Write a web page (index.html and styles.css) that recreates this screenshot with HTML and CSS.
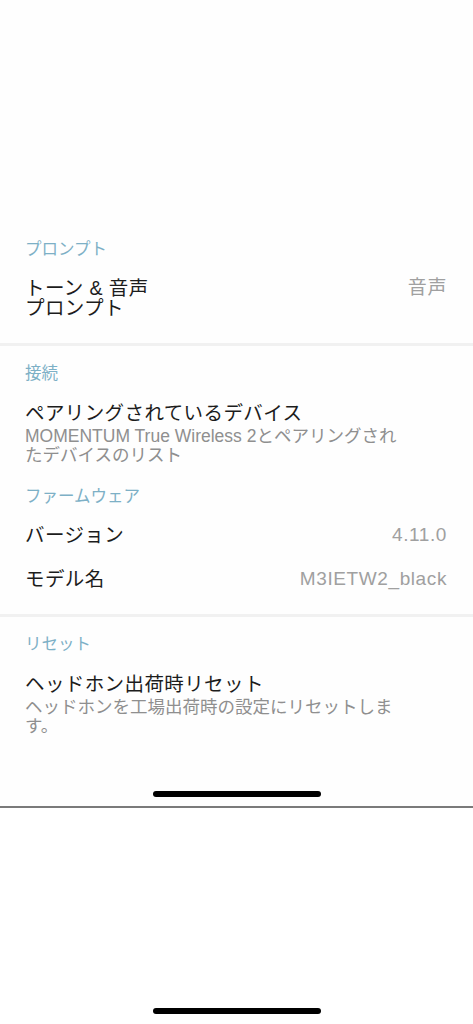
FILE: index.html
```html
<!DOCTYPE html>
<html lang="ja">
  <head>
    <meta charset="UTF-8" />
    <meta name="viewport" content="width=device-width, initial-scale=1.0" />
    <title>設定</title>
    <link rel="stylesheet" href="styles.css">
  </head>
  <body>
    <div class="screen">
      <div class="top-space"></div>

      <section class="group first">
        <div class="section-title">プロンプト</div>
        <div class="item">
          <div class="item-title">トーン &amp; 音声<br>プロンプト</div>
          <div class="item-value">音声</div>
        </div>
      </section>

      <div class="divider"></div>

      <section class="group">
        <div class="section-title">接続</div>
        <div class="item stack">
          <div class="item-title">ペアリングされているデバイス</div>
          <div class="item-sub">MOMENTUM True Wireless 2とペアリングされ<br>たデバイスのリスト</div>
        </div>
        <div class="section-title">ファームウェア</div>
        <div class="item">
          <div class="item-title">バージョン</div>
          <div class="item-value">4.11.0</div>
        </div>
        <div class="item">
          <div class="item-title">モデル名</div>
          <div class="item-value">M3IETW2_black</div>
        </div>
      </section>

      <div class="divider"></div>

      <section class="group">
        <div class="section-title">リセット</div>
        <div class="item stack">
          <div class="item-title">ヘッドホン出荷時リセット</div>
          <div class="item-sub">ヘッドホンを工場出荷時の設定にリセットしま<br>す。</div>
        </div>
      </section>

      <div class="home-bar upper"></div>
    </div>

    <div class="below">
      <div class="home-bar"></div>
    </div>
  </body>
</html>
```

FILE: styles.css
```css
html, body {
  margin: 0;
  padding: 0;
  background: #fff;
}
body {
  font-family: "Liberation Sans", "Noto Sans CJK JP", sans-serif;
  width: 473px;
}
.screen {
  height: 806px;
  border-bottom: 2px solid #7a7a7a;
  display: flex;
  flex-direction: column;
  background: #fefefe;
}
.top-space {
  height: 226px;
}
.group {
  padding: 17px 26px 25px 25px;
}
.group.first {
  padding-top: 13px;
}
.section-title {
  font-size: 16.5px;
  line-height: 20px;
  color: #7db0c6;
  margin-bottom: 19px;
}
.item {
  display: flex;
  justify-content: space-between;
  align-items: flex-start;
  margin-bottom: 24px;
}
.item:last-child {
  margin-bottom: 0;
}
.item.stack {
  display: block;
  margin-bottom: 21px;
}
.item.stack:last-child {
  margin-bottom: 0;
}
.item-title {
  font-size: 19.5px;
  line-height: 20px;
  color: #1c1c1c;
  letter-spacing: 0.4px;
}
.stack .item-title {
  line-height: 22px;
  margin-bottom: 3px;
}
.item-sub {
  font-size: 17.5px;
  line-height: 19px;
  color: #8f8f8f;
}
.item-value {
  font-size: 19px;
  line-height: 20px;
  color: #a0a0a0;
  letter-spacing: 0.6px;
}
.divider {
  height: 3px;
  background: #f1f1f1;
}
.home-bar {
  width: 168px;
  height: 6px;
  border-radius: 3px;
  background: #000;
  margin: 0 auto;
}
.home-bar.upper {
  margin-top: auto;
  margin-bottom: 9px;
}
.below {
  height: 216px;
  display: flex;
  flex-direction: column;
  justify-content: flex-end;
  padding-bottom: 10px;
  box-sizing: border-box;
}
```
